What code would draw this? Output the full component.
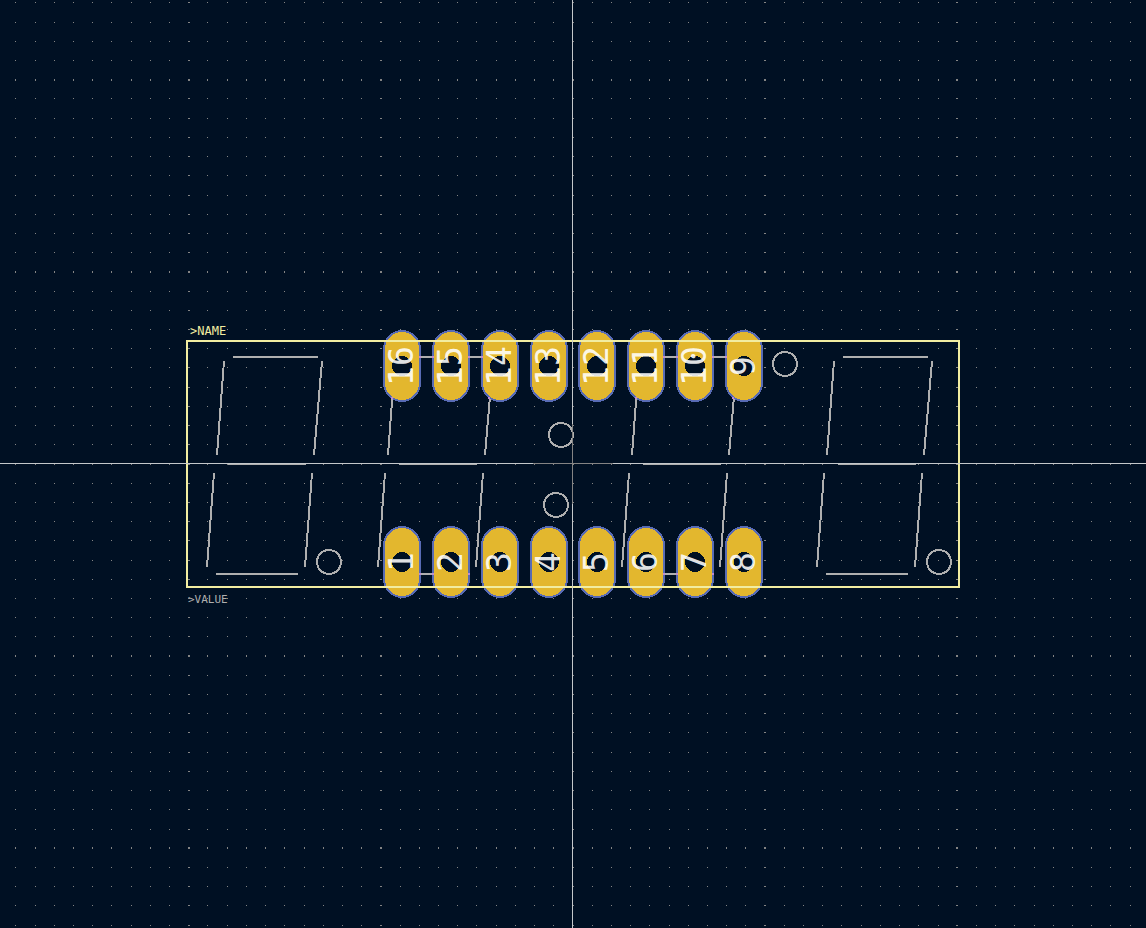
import React from "react";

const ORIGIN = { x: 572, y: 463 };
const PITCH = 19.21;

const COLORS = {
  board: "#001023",
  grid: "#848484",
  silk: "#f2eda1",
  fab: "#afafaf",
  pad: "#e3b72e",
  mask: "#586bb4",
  overlap: "#c08ad2",
  cursor: "#c4c8cb",
};

type Tick = { pos: number; size: number };

function ticks(origin: number, limit: number): Tick[] {
  const out: Tick[] = [];
  for (let k = -32; k <= 32; k++) {
    const major = k % 10 === 0;
    const pos = major
      ? origin + (k / 10) * 192
      : Math.round(origin + 0.5 + k * PITCH + Math.sign(k) * 0.05);
    if (pos >= 0 && pos < limit) out.push({ pos, size: major ? 2 : 1 });
  }
  return out;
}

function Grid() {
  const xs = ticks(ORIGIN.x, 1146);
  const ys = ticks(ORIGIN.y, 928);
  return (
    <g fill={COLORS.grid} shapeRendering="crispEdges">
      {ys.map((y) =>
        xs.map((x) => (
          <rect key={`${x.pos}-${y.pos}`} x={x.pos} y={y.pos} width={x.size} height={y.size} />
        )),
      )}
    </g>
  );
}

function Digit({ dx }: { dx: number }) {
  return (
    <path
      transform={`translate(${dx} 0)`}
      d="M233 357H318M224 361L217 455M322 361L314 455M228 464H306M214 473L207 567M312 473L305 567M216 574H298"
    />
  );
}

const PAD_X = [402, 451, 500, 549, 597, 646, 695, 744];

function Pad({ x, y, label }: { x: number; y: number; label: string }) {
  return (
    <g>
      <g shapeRendering="crispEdges">
        <rect x={x - 19} y={y - 36} width={38} height={72} rx={19} fill={COLORS.mask} />
        <rect x={x - 17} y={y - 34} width={34} height={68} rx={17} fill={COLORS.pad} />
        <circle cx={x} cy={y} r={10} fill={COLORS.board} />
      </g>
      <text
        transform={`translate(${x + 11} ${y}) rotate(-90)`}
        textAnchor="middle"
        className="font-['DejaVu_Sans_Mono',monospace] text-[33px]"
        fill="#ffffff"
        fillOpacity={0.9}
      >
        {label}
      </text>
    </g>
  );
}

const DOTS = [
  [329, 562],
  [561, 435],
  [556, 505],
  [785, 364],
  [939, 562],
];

const OVERLAPS = [
  [419, 356], [432, 356], [468, 356], [481, 356],
  [663, 356], [676, 356], [712, 356], [725, 356],
  [419, 573], [432, 573], [468, 573],
  [663, 573], [676, 573], [712, 573],
  [391, 397], [488, 397], [635, 397], [732, 397],
];

export default function App() {
  return (
    <main className="h-screen w-full overflow-hidden bg-[#001023]">
      <svg
        className="block h-full w-full"
        viewBox="0 0 1146 928"
        preserveAspectRatio="xMidYMid slice"
        role="img"
        aria-label="Footprint"
      >
        <Grid />
        <g fill="none" stroke={COLORS.fab} strokeWidth={2} shapeRendering="crispEdges">
          {[0, 171, 415, 610].map((dx) => (
            <Digit key={dx} dx={dx} />
          ))}
          {DOTS.map(([x, y]) => (
            <circle key={`${x}-${y}`} cx={x} cy={y} r={12} />
          ))}
        </g>

        {PAD_X.map((x, i) => (
          <React.Fragment key={x}>
            <Pad x={x} y={366} label={String(16 - i)} />
            <Pad x={x} y={562} label={String(i + 1)} />
          </React.Fragment>
        ))}
        <g fill={COLORS.overlap}>
          {OVERLAPS.map(([x, y]) => (
            <rect key={`${x}-${y}`} x={x} y={y} width={2} height={2} />
          ))}
        </g>

        <rect x={187} y={341} width={772} height={246} fill="none" stroke={COLORS.silk} strokeWidth={2} shapeRendering="crispEdges" />
        <text x={190} y={335} fill={COLORS.silk} className="font-['DejaVu_Sans_Mono',monospace] text-[12px]">
          &gt;NAME
        </text>
        <text x={188} y={603} fill={COLORS.fab} className="font-['DejaVu_Sans_Mono',monospace] text-[11px]">
          &gt;VALUE
        </text>

        <g shapeRendering="crispEdges">
          <path d="M0 463H1146V464H0ZM572 0H573V928H572Z" fill={COLORS.cursor} />
          <path d="M533 463H613V464H533ZM572 424H573V504H572Z" fill={COLORS.grid} />
        </g>
      </svg>
    </main>
  );
}
